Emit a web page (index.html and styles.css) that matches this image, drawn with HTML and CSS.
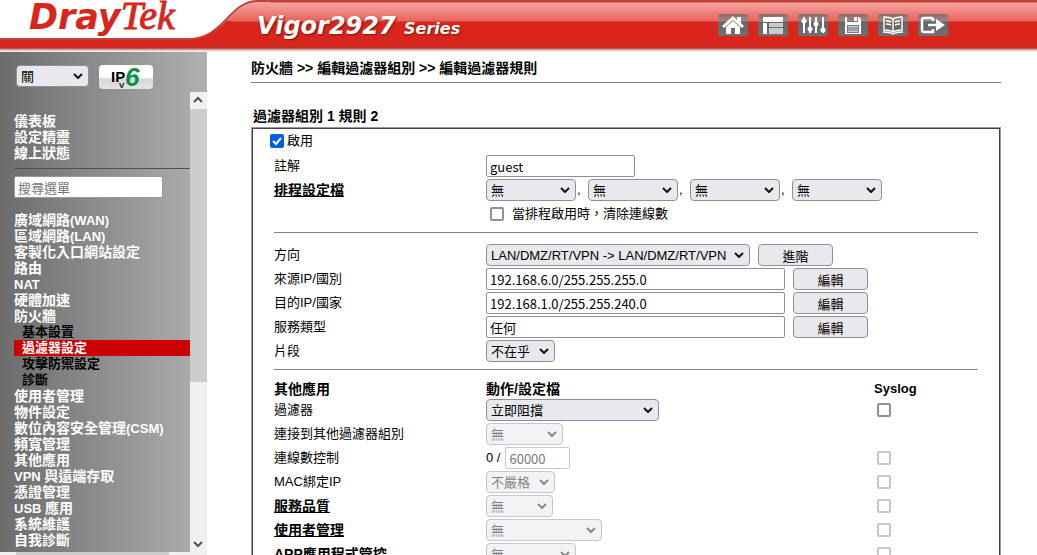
FILE: index.html
```html
<!DOCTYPE html>
<html lang="zh-Hant">
<head>
    <meta charset="UTF-8">
    <meta name="viewport" content="width=device-width, initial-scale=1.0">
    <title>Vigor2927 Series</title>
    <link rel="stylesheet" href="styles.css">
</head>
<body>
    <header class="top-bar">
        <svg class="swoosh" width="270" height="48" viewBox="0 0 270 48" aria-hidden="true">
            <path d="M0 0H270V2C232 2 232 39 190 40H0Z" fill="#d9261c"/>
            <path d="M220 21C232 10 240 1 258 2H270V21Z" fill="url(#shine)"/>
            <path d="M0 0H262C230 1 226 39 188 39H0Z" fill="#fff"/>
            <path d="M270 1H256C228 3 224 39 188 39H0" fill="none" stroke="#c2423a" stroke-width="2"/>
            <defs>
                <linearGradient id="shine" x1="0" y1="0" x2="0" y2="1">
                    <stop offset="0" stop-color="#f5a6a0"/>
                    <stop offset="1" stop-color="#e9625b"/>
                </linearGradient>
            </defs>
        </svg>
        <div class="logo"><span class="logo-dray">Dray</span><span class="logo-tek">Tek</span></div>
        <div class="model">Vigor2927 <span class="series">Series</span></div>
        <nav class="tools">
            <a href="#" aria-label="Home">
                <svg viewBox="0 0 30 22"><path d="M4 12L15 2l4 4V3h4v6l3 3-2 2-9-8-9 8zM8 13l7-6 7 6v7h-5v-6h-4v6H8z" fill="#fff"/></svg>
            </a>
            <a href="#" aria-label="Layout">
                <svg viewBox="0 0 30 22"><path d="M5 3h20v5H5zM5 9h4v11H5z" fill="#fff"/><path d="M11 9h14v4H11zM11 14h14v6H11z" fill="#ccc"/></svg>
            </a>
            <a href="#" aria-label="Settings">
                <svg viewBox="0 0 30 22"><path d="M6 3v16M12 3v16M18 3v16M25 3v16" stroke="#fff" stroke-width="2"/><g fill="#fff"><circle cx="6" cy="7" r="2.5"/><circle cx="12" cy="15" r="2.5"/><circle cx="18" cy="10" r="2.5"/><circle cx="25" cy="16" r="2.5"/></g></svg>
            </a>
            <a href="#" aria-label="Save">
                <svg viewBox="0 0 30 22"><path d="M7 3h2v5h11V3h1l2 2v15H7z" fill="#fff"/><path d="M16 3h3v4h-3z" fill="#fff"/><path d="M9 11h12v8H9z" fill="#777"/><path d="M10 12h10v6H10z" fill="#ccc"/><path d="M10 14h10M10 16h10" stroke="#777"/></svg>
            </a>
            <a href="#" aria-label="Manual">
                <svg viewBox="0 0 30 22"><path d="M15 5C12 3 9 3 6 3v13c3 0 6 0 9 2 3-2 6-2 9-2V3c-3 0-6 0-9 2zv13M5 18c4 0 7 0 10 2 3-2 6-2 10-2M8 7c2 0 3 0 5 1M8 10c2 0 3 0 5 1M17 8c2-1 3-1 5-1M17 11c2-1 3-1 5-1" fill="none" stroke="#fff" stroke-width="1.4"/></svg>
            </a>
            <a href="#" aria-label="Logout">
                <svg viewBox="0 0 30 22"><path d="M15 4H6q-2 0-2 2v10q0 2 2 2h9v-3M15 4v3M10 11h9" fill="none" stroke="#fff" stroke-width="2.5"/><path d="M18 5l9 6-9 6z" fill="#fff"/></svg>
            </a>
        </nav>
    </header>

    <div class="frames">
        <aside class="sidebar">
            <div class="sidebar-top">
                <select class="auto-logout" aria-label="自動登出"><option>關</option></select>
                <button class="ipv6" type="button" aria-label="IPv6">
                    <svg width="54" height="24" viewBox="0 0 54 24">
                        <text x="12" y="17" class="ip">IP</text>
                        <text x="20" y="23" class="ip-v">V</text>
                        <text x="26" y="21" class="ip-six">6</text>
                    </svg>
                </button>
            </div>
            <div class="menu-frame">
                <nav class="menu">
                    <ul>
                        <li><a href="#">儀表板</a></li>
                        <li><a href="#">設定精靈</a></li>
                        <li><a href="#">線上狀態</a></li>
                    </ul>
                    <hr>
                    <input class="menu-search" type="text" placeholder="搜尋選單" aria-label="搜尋選單">
                    <ul>
                        <li><a href="#">廣域網路<span class="latin">(WAN)</span></a></li>
                        <li><a href="#">區域網路<span class="latin">(LAN)</span></a></li>
                        <li><a href="#">客製化入口網站設定</a></li>
                        <li><a href="#">路由</a></li>
                        <li><a href="#"><span class="latin">NAT</span></a></li>
                        <li><a href="#">硬體加速</a></li>
                        <li><a href="#">防火牆</a>
                            <ul class="submenu">
                                <li><a href="#">基本設置</a></li>
                                <li class="active"><a href="#">過濾器設定</a></li>
                                <li><a href="#">攻擊防禦設定</a></li>
                                <li><a href="#">診斷</a></li>
                            </ul>
                        </li>
                        <li><a href="#">使用者管理</a></li>
                        <li><a href="#">物件設定</a></li>
                        <li><a href="#">數位內容安全管理<span class="latin">(CSM)</span></a></li>
                        <li><a href="#">頻寬管理</a></li>
                        <li><a href="#">其他應用</a></li>
                        <li><a href="#"><span class="latin">VPN </span>與遠端存取</a></li>
                        <li><a href="#">憑證管理</a></li>
                        <li><a href="#"><span class="latin">USB </span>應用</a></li>
                        <li><a href="#">系統維護</a></li>
                        <li><a href="#">自我診斷</a></li>
                    </ul>
                </nav>
                <div class="scrollbar" aria-hidden="true">
                    <svg width="17" height="17"><path d="M4 10l4-4 4 4" fill="none" stroke="#505050" stroke-width="2"/></svg>
                    <div class="scroll-track"><div class="scroll-thumb"></div></div>
                    <svg width="17" height="17"><path d="M4 7l4 4 4-4" fill="none" stroke="#505050" stroke-width="2"/></svg>
                </div>
            </div>
            <div class="scrollbar-h" aria-hidden="true"><div class="scroll-thumb-h"></div></div>
        </aside>

        <main class="content">
            <h1>防火牆 &gt;&gt; 編輯過濾器組別 &gt;&gt; 編輯過濾器規則</h1>
            <h2>過濾器組別 1 規則 2</h2>
            <form class="rule-box">
                <div class="enable-row">
                    <input type="checkbox" id="enable" checked>
                    <label for="enable">啟用</label>
                </div>
                <div class="row">
                    <label class="name" for="comment">註解</label>
                    <input type="text" id="comment" class="w-comment" value="guest">
                </div>
                <div class="row">
                    <a class="name" href="#">排程設定檔</a>
                    <select class="w-90" aria-label="排程 1"><option>無</option></select><span class="comma">,</span>
                    <select class="w-90" aria-label="排程 2"><option>無</option></select><span class="comma">,</span>
                    <select class="w-90" aria-label="排程 3"><option>無</option></select><span class="comma">,</span>
                    <select class="w-90" aria-label="排程 4"><option>無</option></select>
                </div>
                <div class="row">
                    <span class="name"></span>
                    <div class="clear-session">
                        <input type="checkbox" id="clear">
                        <label for="clear">當排程啟用時，清除連線數</label>
                    </div>
                </div>
                <hr>
                <div class="row">
                    <label class="name" for="direction">方向</label>
                    <select id="direction" class="w-direction"><option>LAN/DMZ/RT/VPN -&gt; LAN/DMZ/RT/VPN</option></select>
                    <button type="button">進階</button>
                </div>
                <div class="row">
                    <label class="name" for="source">來源IP/國別</label>
                    <input type="text" id="source" class="w-address" value="192.168.6.0/255.255.255.0">
                    <button type="button">編輯</button>
                </div>
                <div class="row">
                    <label class="name" for="destination">目的IP/國家</label>
                    <input type="text" id="destination" class="w-address" value="192.168.1.0/255.255.240.0">
                    <button type="button">編輯</button>
                </div>
                <div class="row">
                    <label class="name" for="service">服務類型</label>
                    <input type="text" id="service" class="w-address" value="任何">
                    <button type="button">編輯</button>
                </div>
                <div class="row">
                    <label class="name" for="fragment">片段</label>
                    <select id="fragment" class="w-69"><option>不在乎</option></select>
                </div>
                <hr>
                <table>
                    <thead>
                        <tr><th class="col-name">其他應用</th><th>動作/設定檔</th><th class="col-syslog">Syslog</th></tr>
                    </thead>
                    <tbody>
                        <tr>
                            <td><label for="filter">過濾器</label></td>
                            <td><select id="filter" class="w-filter"><option>立即阻擋</option></select></td>
                            <td><input type="checkbox" aria-label="過濾器 Syslog"></td>
                        </tr>
                        <tr>
                            <td><label for="branch">連接到其他過濾器組別</label></td>
                            <td><select id="branch" class="w-77" disabled><option>無</option></select></td>
                            <td></td>
                        </tr>
                        <tr>
                            <td><label for="sessions">連線數控制</label></td>
                            <td><div class="sessions">0 / <input type="text" id="sessions" class="w-sessions" value="60000" disabled></div></td>
                            <td><input type="checkbox" aria-label="連線數控制 Syslog" disabled></td>
                        </tr>
                        <tr>
                            <td><label for="mac">MAC綁定IP</label></td>
                            <td><select id="mac" class="w-69" disabled><option>不嚴格</option></select></td>
                            <td><input type="checkbox" aria-label="MAC Syslog" disabled></td>
                        </tr>
                        <tr>
                            <td><a href="#">服務品質</a></td>
                            <td><select class="w-67" aria-label="服務品質" disabled><option>無</option></select></td>
                            <td><input type="checkbox" aria-label="服務品質 Syslog" disabled></td>
                        </tr>
                        <tr>
                            <td><a href="#">使用者管理</a></td>
                            <td><select class="w-user" aria-label="使用者管理" disabled><option>無</option></select></td>
                            <td><input type="checkbox" aria-label="使用者管理 Syslog" disabled></td>
                        </tr>
                        <tr>
                            <td><a href="#">APP應用程式管控</a></td>
                            <td><select class="w-90" aria-label="APP應用程式管控" disabled><option>無</option></select></td>
                            <td><input type="checkbox" aria-label="APP Syslog" disabled></td>
                        </tr>
                    </tbody>
                </table>
            </form>
        </main>
    </div>
</body>
</html>
```
FILE: styles.css
```css
* {
    box-sizing: border-box;
}

body {
    margin: 0;
    height: 100vh;
    display: flex;
    flex-direction: column;
    overflow: hidden;
    background-color: #fff;
    color: #000;
    font-family: "Liberation Sans", "Noto Sans CJK TC", sans-serif;
    font-size: 13px;
    line-height: 16px;
}

ul {
    list-style: none;
    margin: 0;
    padding: 0;
}

/* Header */
.top-bar {
    position: relative;
    flex: none;
    display: flex;
    height: 52px;
    background: linear-gradient(#c2423a 0, #c2423a 2px, #f5a6a0 3px, #e9625b 21px, #d9261c 22px, #d9261c 46px, #b8302a 48px, #d8c0bc 50px, #fff 52px);
}

.swoosh {
    position: absolute;
    left: 0;
    top: 0;
}

.logo {
    position: relative;
    width: 257px;
    padding-left: 29px;
    color: #d9261c;
    line-height: 32px;
    white-space: nowrap;
}

.logo-dray {
    font-family: "DejaVu Sans", sans-serif;
    font-size: 35px;
    font-weight: bold;
    font-style: italic;
}

.logo-tek {
    font-family: "Liberation Serif", serif;
    font-size: 40px;
    font-style: italic;
    -webkit-text-stroke: 1px #d9261c;
}

.model {
    position: relative;
    color: #fff;
    font-family: "DejaVu Sans", sans-serif;
    font-size: 24px;
    font-weight: bold;
    font-style: italic;
    line-height: 52px;
    text-shadow: 1px 1px 2px #7a1510;
    white-space: nowrap;
}

.series {
    font-size: 16px;
}

.tools {
    display: flex;
    gap: 10px;
    margin-left: auto;
    padding: 14px 89px 0 0;
}

.tools a {
    width: 30px;
    height: 22px;
    border-radius: 2px;
    background: linear-gradient(#8f6b69 0, #a08583 7px, #666 8px, #707070 22px);
}

.tools svg {
    display: block;
}

/* Two frames under the header */
.frames {
    flex: 1;
    min-height: 0;
    display: flex;
}

.sidebar {
    flex: none;
    width: 207px;
    display: flex;
    flex-direction: column;
    background: linear-gradient(to right, #6c6c6c, #b0b0b0);
}

.sidebar-top {
    flex: none;
    display: flex;
    gap: 10px;
    height: 40px;
    padding: 13px 16px 0;
}

.auto-logout {
    width: 73px;
}

.ipv6 {
    width: 54px;
    height: 24px;
    padding: 0;
    border: none;
    border-radius: 4px;
    background: linear-gradient(#fff 0, #fff 50%, #d8d8d8 60%, #e4e4e4);
}

.ipv6 svg {
    display: block;
}

.ip {
    font: bold 15px "Liberation Sans", sans-serif;
}

.ip-v {
    font: bold 8px "Liberation Sans", sans-serif;
}

.ip-six {
    font: italic bold 26px "Liberation Sans", sans-serif;
    fill: #0e8f45;
}

.menu-frame {
    flex: 1;
    min-height: 0;
    display: flex;
}

.menu {
    flex: 1;
    overflow: hidden;
    padding: 21px 0 0 14px;
    font-size: 14px;
    font-weight: bold;
}

.menu li {
    white-space: nowrap;
}

.menu a {
    display: block;
    height: 16px;
    color: #fff;
    text-decoration: none;
}

.latin {
    font-size: 13px;
}

.menu hr {
    margin: 7px 0;
    border: none;
    border-top: 1px solid #505050;
}

.menu .menu-search {
    display: block;
    width: 149px;
    margin-bottom: 14px;
    border-color: #999;
}

.submenu {
    font-size: 13px;
}

.submenu a {
    padding-left: 8px;
    color: #000;
}

.submenu .active {
    background-color: #c00;
}

.submenu .active a {
    color: #fff;
}

.scrollbar {
    width: 17px;
    display: flex;
    flex-direction: column;
    background-color: #f0f0f0;
}

.scrollbar svg {
    flex: none;
}

.scroll-track {
    flex: 1;
}

.scroll-thumb {
    height: 64%;
    background-color: #cdcdcd;
}

.scrollbar-h {
    flex: none;
    height: 3px;
    padding: 0 38px 0 16px;
    background-color: #f0f0f0;
}

.scroll-thumb-h {
    height: 3px;
    background-color: #cdcdcd;
}

/* Rule page */
.content {
    flex: 1;
    min-width: 0;
    overflow: hidden;
    padding: 8px 36px 0 44px;
}

h1 {
    margin: 0 0 25px;
    padding-bottom: 6px;
    border-bottom: 1px solid #808080;
    font-size: 14px;
    line-height: 16px;
}

h2 {
    margin: 0 0 3px;
    padding-left: 2px;
    font-size: 14px;
    line-height: 16px;
}

.rule-box {
    padding: 0 22px;
    border: 1px solid #999;
    box-shadow: inset 0 0 0 1px #444;
}

.enable-row {
    display: flex;
    align-items: center;
    gap: 3px;
    height: 26px;
    margin-left: -4px;
}

.row {
    display: flex;
    align-items: center;
    height: 24px;
}

.name {
    flex: none;
    width: 212px;
}

.content a {
    color: #000;
    font-size: 14px;
    font-weight: bold;
}

.comma {
    width: 12px;
    padding-left: 1px;
}

.clear-session {
    display: flex;
    align-items: center;
    gap: 8px;
    padding-left: 4px;
}

.rule-box hr {
    margin: 6px 0 10px;
    border: none;
    border-top: 1px solid #808080;
}

.row button {
    margin-left: 8px;
}

/* Controls */
input[type="text"] {
    height: 22px;
    padding: 0 3px;
    border: 1px solid #8f8f9d;
    border-radius: 2px;
    background-color: #fff;
    color: #000;
    font-family: "Noto Sans CJK TC", sans-serif;
    font-size: 13px;
}

input[type="text"]:disabled {
    border-color: #c7c7ce;
    color: #777;
}

select {
    appearance: none;
    display: block;
    height: 22px;
    padding: 0 4px;
    border: 1px solid #8f8f9d;
    border-radius: 4px;
    background: #e9e9ed url("data:image/svg+xml,%3Csvg xmlns='http://www.w3.org/2000/svg' width='10' height='6'%3E%3Cpath d='M1 1l4 4 4-4' fill='none' stroke='%23111' stroke-width='2'/%3E%3C/svg%3E") no-repeat right 5px center;
    color: #000;
    font-family: inherit;
    font-size: 13px;
}

select:disabled {
    opacity: 0.5;
}

button {
    width: 75px;
    height: 22px;
    padding: 0;
    border: 1px solid #8f8f9d;
    border-radius: 4px;
    background-color: #e9e9ed;
    color: #000;
    font-family: inherit;
    font-size: 13px;
}

input[type="checkbox"] {
    appearance: none;
    display: block;
    width: 14px;
    height: 14px;
    margin: 0;
    border: 2px solid #8f8f9d;
    border-radius: 2px;
    background-color: #fff;
}

input[type="checkbox"]:checked {
    border: none;
    background: #0060df url("data:image/svg+xml,%3Csvg xmlns='http://www.w3.org/2000/svg' width='14' height='14'%3E%3Cpath d='M3 7l3 3 5-6' fill='none' stroke='%23fff' stroke-width='2'/%3E%3C/svg%3E");
}

input[type="checkbox"]:disabled {
    opacity: 0.5;
}

.w-comment {
    width: 149px;
}

.w-address {
    width: 299px;
}

.w-direction {
    width: 264px;
}

.w-filter {
    width: 173px;
}

.w-user {
    width: 116px;
}

.w-90 {
    width: 90px;
}

.w-77 {
    width: 77px;
}

.w-69 {
    width: 69px;
}

.w-67 {
    width: 67px;
}

.w-sessions {
    width: 65px;
}

/* Other applications */
table {
    width: 100%;
    border-collapse: collapse;
    table-layout: fixed;
}

th {
    height: 18px;
    padding: 0;
    text-align: left;
    font-size: 14px;
}

.col-name {
    width: 212px;
}

th.col-syslog {
    width: 104px;
    font-size: 13px;
}

td {
    height: 24px;
    padding: 0;
}

td input[type="checkbox"] {
    margin-left: 3px;
}

.sessions {
    display: flex;
    align-items: center;
    gap: 5px;
}
```
